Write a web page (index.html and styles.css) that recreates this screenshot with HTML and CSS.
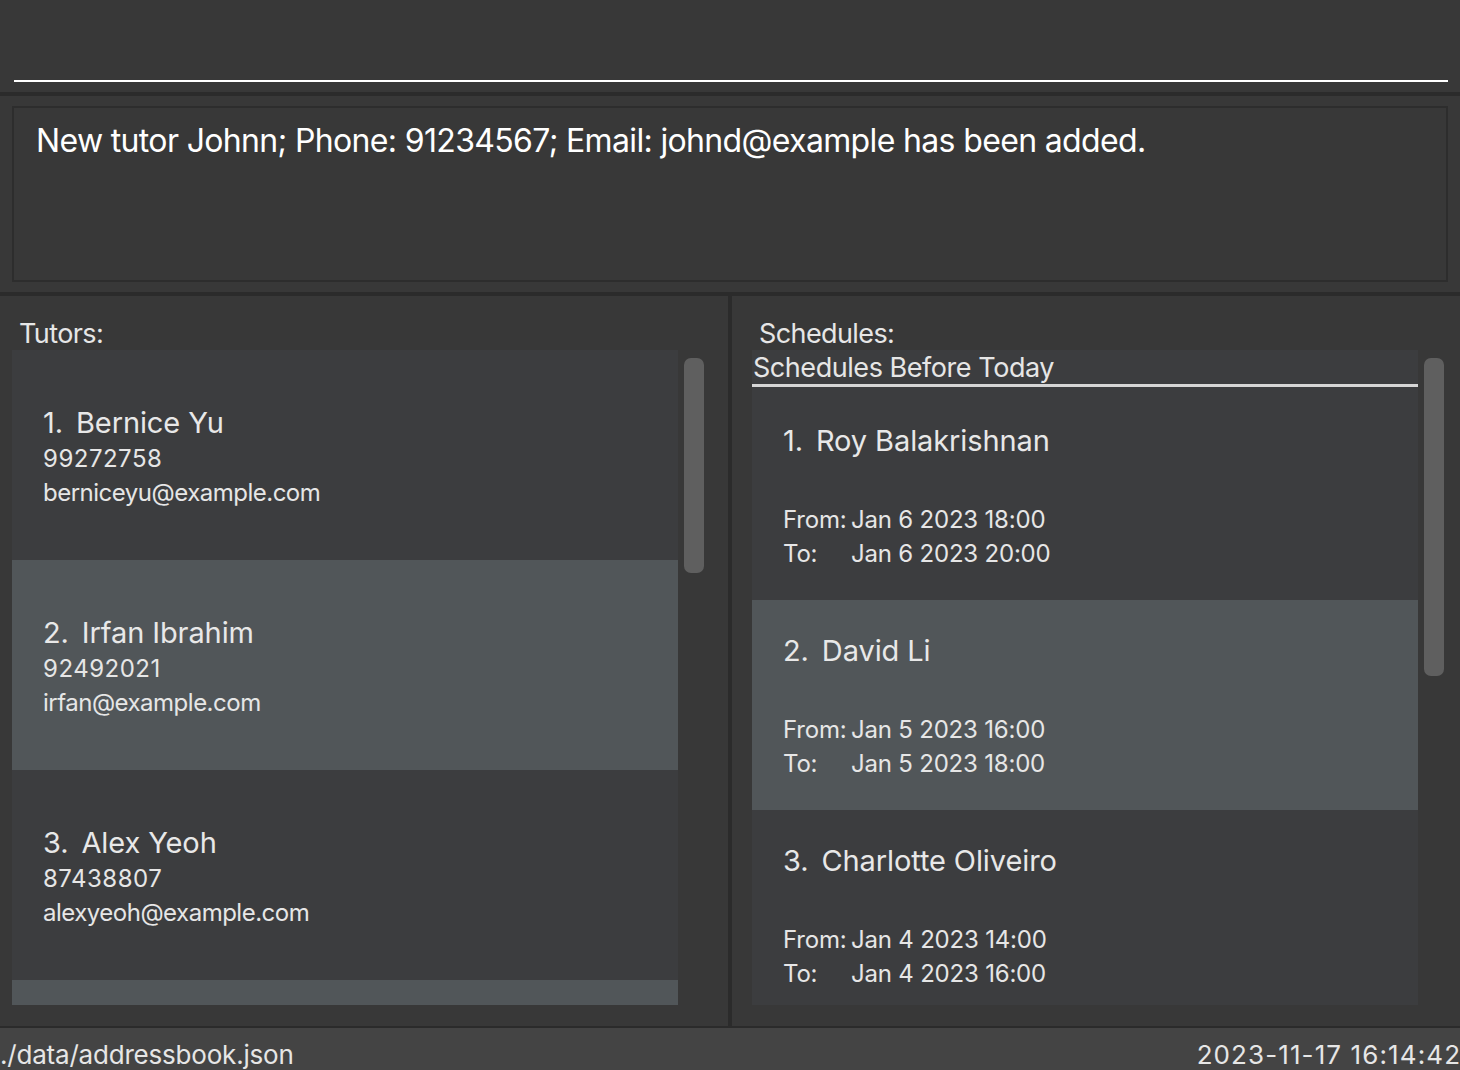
FILE: index.html
```html
<!DOCTYPE html>
<html>
<head>
<meta charset="utf-8">
<link rel="stylesheet" href="styles.css">
</head>
<body>
<div class="app">
  <div class="command"><div class="cmd-input"></div></div>
  <div class="sep"></div>
  <div class="result">
    <div class="result-box">New tutor Johnn; Phone: 91234567; Email: johnd@example has been added.</div>
  </div>
  <div class="sep"></div>
  <div class="main">
    <div class="panel panel-left">
      <div class="label">Tutors:</div>
      <div class="list-wrap">
        <div class="list">
          <div class="card">
            <div class="name"><span class="idx">1.</span>Bernice Yu</div>
            <div class="detail phone">99272758</div>
            <div class="detail">berniceyu@example.com</div>
          </div>
          <div class="card alt">
            <div class="name"><span class="idx">2.</span>Irfan Ibrahim</div>
            <div class="detail phone">92492021</div>
            <div class="detail">irfan@example.com</div>
          </div>
          <div class="card">
            <div class="name"><span class="idx">3.</span>Alex Yeoh</div>
            <div class="detail phone">87438807</div>
            <div class="detail">alexyeoh@example.com</div>
          </div>
          <div class="card alt"></div>
        </div>
        <div class="track"><div class="thumb thumb-left"></div></div>
      </div>
    </div>
    <div class="vdiv"></div>
    <div class="panel panel-right">
      <div class="label label-right">Schedules:</div>
      <div class="list-wrap">
        <div class="list">
          <div class="sched-head">Schedules Before Today</div>
          <div class="scard">
            <div class="name"><span class="idx">1.</span>Roy Balakrishnan</div>
            <div class="times">
              <span>From:</span><span>Jan 6 2023 18:00</span>
              <span>To:</span><span>Jan 6 2023 20:00</span>
            </div>
          </div>
          <div class="scard alt">
            <div class="name"><span class="idx">2.</span>David Li</div>
            <div class="times">
              <span>From:</span><span>Jan 5 2023 16:00</span>
              <span>To:</span><span>Jan 5 2023 18:00</span>
            </div>
          </div>
          <div class="scard">
            <div class="name"><span class="idx">3.</span>Charlotte Oliveiro</div>
            <div class="times">
              <span>From:</span><span>Jan 4 2023 14:00</span>
              <span>To:</span><span>Jan 4 2023 16:00</span>
            </div>
          </div>
        </div>
        <div class="track"><div class="thumb thumb-right"></div></div>
      </div>
    </div>
  </div>
  <div class="status">
    <span class="path">./data/addressbook.json</span>
    <span class="clock">2023-11-17 16:14:42</span>
  </div>
</div>
</body>
</html>
```

FILE: styles.css
```css
html, body {
  margin: 0;
  padding: 0;
}
body {
  background: #383838;
  font-family: "Inter", "Liberation Sans", sans-serif;
  color: #e6e6e6;
}
.app {
  width: 1460px;
  height: 1070px;
  display: flex;
  flex-direction: column;
  overflow: hidden;
}
.command {
  height: 92px;
  padding: 0 12px 0 14px;
  box-sizing: border-box;
}
.cmd-input {
  height: 80px;
  border-bottom: 2px solid #ffffff;
}
.sep {
  height: 4px;
  background: #2b2b2b;
  flex: none;
}
.result {
  height: 196px;
  padding: 10px 12px 0 12px;
  box-sizing: border-box;
}
.result-box {
  height: 176px;
  box-sizing: border-box;
  border: 2px solid #2d2d2d;
  padding: 14px 22px;
  color: #ffffff;
  font-size: 32px;
  line-height: 38px;
  letter-spacing: -0.65px;
}
.main {
  height: 730px;
  display: flex;
  flex: none;
}
.panel {
  width: 728px;
  box-sizing: border-box;
  padding-top: 23px;
}
.panel-left {
  padding-left: 12px;
}
.panel-right {
  padding-left: 20px;
}
.vdiv {
  width: 4px;
  background: #2b2b2b;
}
.label {
  height: 30px;
  margin-bottom: 1px;
  padding-left: 7px;
  font-size: 27px;
  line-height: 30px;
  letter-spacing: -0.6px;
  color: #e6e6e6;
}
.list-wrap {
  display: flex;
  height: 655px;
}
.list {
  width: 666px;
  height: 655px;
  background: #3c3d3f;
  overflow: hidden;
  flex: none;
}
.track {
  margin-left: 6px;
  padding-top: 8px;
  width: 20px;
}
.thumb {
  width: 20px;
  background: #5f5f5f;
  border-radius: 7px;
}
.thumb-left { height: 215px; }
.thumb-right { height: 318px; }
.card {
  height: 210px;
  box-sizing: border-box;
  padding: 53px 0 0 31px;
}
.alt {
  background: #515659;
}
.name {
  font-size: 29px;
  line-height: 37px;
  letter-spacing: -0.1px;
  color: #e8e8e8;
}
.scard .name {
  line-height: 36px;
}
.card .name {
  line-height: 39px;
}
.idx {
  margin-right: 13px;
}
.detail {
  font-size: 24px;
  line-height: 34px;
  letter-spacing: -0.5px;
  color: #e6e6e6;
}
.phone {
  letter-spacing: 0.5px;
}
.sched-head {
  height: 34px;
  border-bottom: 3px solid #d6d6d6;
  margin-bottom: 3px;
  padding-left: 1px;
  font-size: 27px;
  line-height: 36px;
  letter-spacing: -0.45px;
  color: #e6e6e6;
}
.scard {
  height: 210px;
  box-sizing: border-box;
  padding: 33px 0 0 31px;
}
.times {
  margin-top: 44px;
  display: grid;
  grid-template-columns: 68px auto;
  font-size: 24px;
  line-height: 34px;
  letter-spacing: -0.2px;
  color: #e6e6e6;
}
.status {
  height: 44px;
  flex: none;
  box-sizing: border-box;
  border-top: 2px solid #2b2b2b;
  background: #444444;
  display: flex;
  justify-content: space-between;
  padding-top: 11px;
  font-size: 26px;
  line-height: 32px;
  color: #e6e6e6;
}
.path {
  letter-spacing: -0.2px;
}
.clock {
  letter-spacing: 1.1px;
  margin-right: -1.1px;
}
```
